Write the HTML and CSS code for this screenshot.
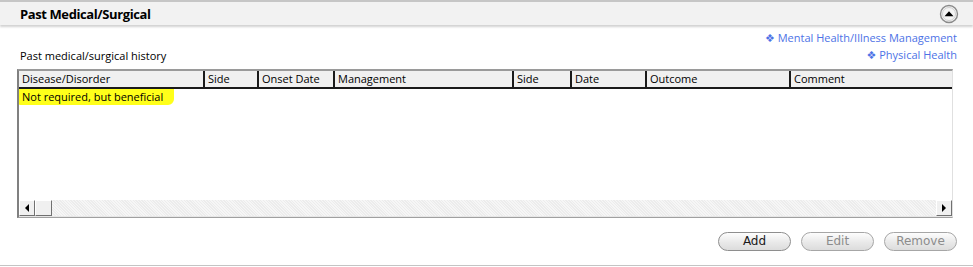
FILE: index.html
```html
<!DOCTYPE html>
<html lang="en">
<head>
    <meta charset="UTF-8">
    <title>Past Medical/Surgical</title>
    <link rel="stylesheet" href="styles.css">
</head>
<body>
    <section class="panel">
        <header class="panel-head">
            <h2 class="panel-title">Past Medical/Surgical</h2>
            <span class="collapse">
                <svg width="20" height="20" viewBox="0 0 20 20">
                    <circle cx="10" cy="10" r="8.5" fill="#f4f4f4" stroke="#8a8a8a" stroke-width="1.4"/>
                    <circle cx="10" cy="10" r="6.5" fill="none" stroke="#d0d0d0" stroke-width="1"/>
                    <path d="M5.5 12.2 L10 7.2 L14.5 12.2 Z" fill="#000"/>
                </svg>
            </span>
        </header>

        <div class="panel-body">
            <div class="links">
                <a href="#">&#10070; Mental Health/Illness Management</a>
                <a href="#">&#10070; Physical Health</a>
            </div>
            <div class="caption">Past medical/surgical history</div>

            <div class="grid">
                <div class="grid-head">
                    <div class="col c1">Disease/Disorder</div>
                    <div class="col c2">Side</div>
                    <div class="col c3">Onset Date</div>
                    <div class="col c4">Management</div>
                    <div class="col c5">Side</div>
                    <div class="col c6">Date</div>
                    <div class="col c7">Outcome</div>
                    <div class="col c8">Comment</div>
                </div>
                <div class="grid-rows">
                    <span class="marker">Not required, but beneficial</span>
                </div>
                <div class="hscroll">
                    <div class="sb-btn"><span class="arr-l"></span></div>
                    <div class="sb-thumb"></div>
                    <div class="sb-track"></div>
                    <div class="sb-btn"><span class="arr-r"></span></div>
                </div>
            </div>

            <div class="actions">
                <button class="pill">Add</button>
                <button class="pill off">Edit</button>
                <button class="pill off">Remove</button>
            </div>
        </div>
    </section>
</body>
</html>
```

FILE: styles.css
```css
body {
    margin: 0;
    background: #fff;
    font-family: "Open Sans", "DejaVu Sans", sans-serif;
    color: #000;
}

.panel {
    width: 973px;
    height: 266px;
    border-bottom: 1px solid #c4c4c4;
    box-sizing: border-box;
}

.panel-head {
    height: 25px;
    background: #f2f2f2;
    border-top: 2px solid #c6c6c6;
    box-shadow: 0 2px 2px rgba(0,0,0,0.18);
    display: flex;
    align-items: center;
    justify-content: space-between;
    padding: 0 14px 0 20px;
    box-sizing: border-box;
}

.panel-title {
    margin: 0;
    font-size: 13px;
    font-weight: bold;
    letter-spacing: -0.4px;
}

.collapse {
    display: flex;
    margin-top: 1px;
}

.panel-body {
    padding: 4px 16px 0 17px;
}

.links {
    display: flex;
    flex-direction: column;
    align-items: flex-end;
    line-height: 17px;
}
.links a {
    color: #4d72e6;
    text-decoration: none;
    font-size: 11px;
}

.caption {
    font-size: 11px;
    margin: -14px 0 0 3px;
    line-height: 14px;
}

.grid {
    margin-top: 6px;
    width: 936px;
    height: 149px;
    border: 1px solid #a0a0a0;
    border-top: 2px solid #9a9a9a;
    border-left: 2px solid #808080;
    border-right: 1px solid #e0e0e0;
    box-sizing: border-box;
    display: flex;
    flex-direction: column;
}

.grid-head {
    display: flex;
    height: 16px;
    background: #f0f0f0;
    border-bottom: 2px solid #1a1a1a;
    font-size: 11px;
    line-height: 15px;
}

.col {
    padding-left: 3px;
    border-right: 2px solid #1a1a1a;
    box-sizing: border-box;
    white-space: nowrap;
}
.c1 { width: 186px; }
.c2 { width: 54px; }
.c3 { width: 76px; }
.c4 { width: 179px; }
.c5 { width: 58px; }
.c6 { width: 75px; }
.c7 { width: 144px; }
.c8 { flex: 1; border-right: 0; }

.grid-rows {
    flex: 1;
    display: flex;
    align-items: flex-start;
}

.marker {
    background: #ffff1a;
    font-size: 11px;
    line-height: 15px;
    padding: 0 11px 1px 3px;
    border-radius: 0 0 6px 1px;
}

.hscroll {
    display: flex;
    height: 16px;
    border-bottom: 1px solid #e6e6e6;
}
.sb-btn, .sb-thumb {
    width: 16px;
    background: #f0f0f0;
    border: 1px solid #fff;
    border-right-color: #707070;
    border-bottom-color: #707070;
    box-sizing: border-box;
    display: flex;
    align-items: center;
    justify-content: center;
}
.sb-thumb { width: 17px; }
.sb-track {
    flex: 1;
    background-color: #f6f6f6;
    background-image: repeating-linear-gradient(45deg, #ececec 0 1px, transparent 1px 2px);
}
.arr-l, .arr-r {
    width: 0;
    height: 0;
    border-top: 4px solid transparent;
    border-bottom: 4px solid transparent;
}
.arr-l { border-right: 4px solid #000; }
.arr-r { border-left: 4px solid #000; }

.actions {
    display: flex;
    justify-content: flex-end;
    gap: 10px;
    margin-top: 14px;
}

.pill {
    width: 73px;
    height: 19px;
    border: 1px solid #8e8e8e;
    border-radius: 10px;
    background: linear-gradient(#fdfdfd, #e9e9e9 55%, #dcdcdc);
    font-family: "DejaVu Sans", sans-serif;
    font-size: 12px;
    color: #1a1a1a;
    padding: 0;
    line-height: 17px;
}
.pill.off {
    color: #8c8c8c;
    border-color: #a6a6a6;
}
```
